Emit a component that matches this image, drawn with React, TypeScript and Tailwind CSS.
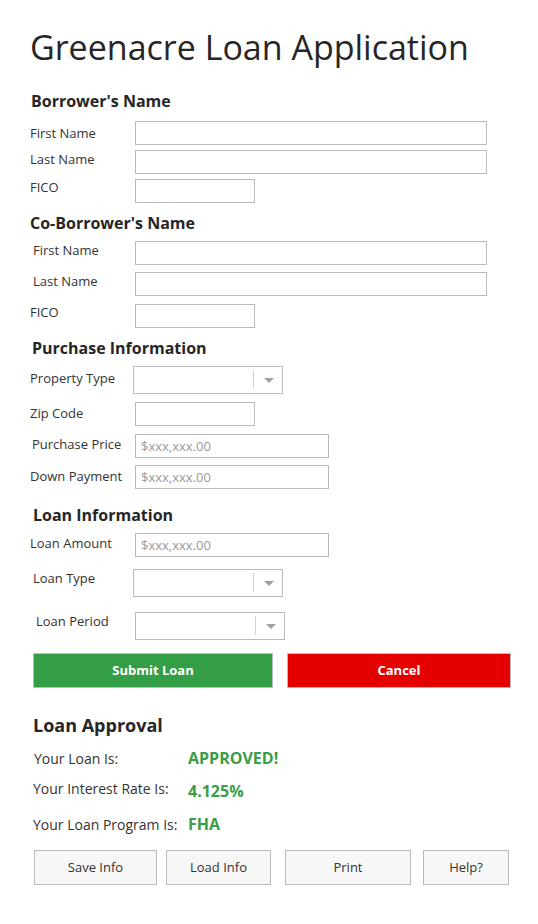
import React from 'react';

interface FieldProps {
  label: string;
  labelClass: string;
  rowClass: string;
  children: React.ReactNode;
}

function Field({ label, labelClass, rowClass, children }: FieldProps) {
  return (
    <div className={`flex items-center ${rowClass}`}>
      <div className={`shrink-0 text-[13px] leading-[18px] text-[#333] ${labelClass}`}>{label}</div>
      {children}
    </div>
  );
}

function TextBox({ wide, placeholder }: { wide: 'full' | 'short' | 'mid'; placeholder?: string }) {
  const w = wide === 'full' ? 'w-[352px]' : wide === 'mid' ? 'w-[194px]' : 'w-[120px]';
  return (
    <input
      type="text"
      placeholder={placeholder}
      className={`${w} h-[24px] border border-[#bbb] bg-white px-[5px] text-[13px] text-[#333] outline-none placeholder:text-[#999]`}
    />
  );
}

// dropdown look-alike: empty box, thin divider, grey caret
function Dropdown() {
  return (
    <div className="relative h-[28px] w-[150px] border border-[#bbb] bg-white">
      <div className="absolute left-[119px] top-[3px] h-[19px] w-px bg-[#d4d4d4]"></div>
      <svg className="absolute left-[130px] top-[11px]" width="10" height="5" viewBox="0 0 10 5">
        <path d="M0 0 L10 0 L5 5 Z" fill="#a0a0a0" />
      </svg>
    </div>
  );
}

export default function App() {
  return (
    <div className="min-h-[924px] w-[538px] bg-white pl-[30px] font-['Open_Sans','Liberation_Sans',sans-serif] text-[#333]">
      <h1 className="pt-[27px] text-[34px] leading-[40px] text-[#262626]">Greenacre Loan Application</h1>

      {/* Borrower */}
      <h2 className="mt-[23px] ml-px text-[16px] font-bold leading-[22px] text-[#262626]">Borrower's Name</h2>
      <Field label="First Name" labelClass="w-[105px]" rowClass="mt-[9px] h-[24px]">
        <TextBox wide="full" />
      </Field>
      <Field label="Last Name" labelClass="w-[105px] mb-[6px]" rowClass="mt-[5px] h-[24px]">
        <TextBox wide="full" />
      </Field>
      <Field label="FICO" labelClass="w-[105px] mb-[8px]" rowClass="mt-[5px] h-[24px]">
        <TextBox wide="short" />
      </Field>

      {/* Co-Borrower */}
      <h2 className="mt-[9px] text-[16px] font-bold leading-[22px] text-[#262626]">Co-Borrower's Name</h2>
      <Field label="First Name" labelClass="w-[105px] pl-[3px] mb-[6px]" rowClass="mt-[7px] h-[24px]">
        <TextBox wide="full" />
      </Field>
      <Field label="Last Name" labelClass="w-[105px] pl-[3px] mb-[6px]" rowClass="mt-[7px] h-[24px]">
        <TextBox wide="full" />
      </Field>
      <Field label="FICO" labelClass="w-[105px] mb-[8px]" rowClass="mt-[8px] h-[24px]">
        <TextBox wide="short" />
      </Field>

      {/* Purchase */}
      <h2 className="mt-[9px] ml-[2px] text-[16px] font-bold leading-[22px] text-[#262626]">Purchase Information</h2>
      <Field label="Property Type" labelClass="w-[103px] mb-[4px]" rowClass="mt-[7px] h-[28px]">
        <Dropdown />
      </Field>
      <Field label="Zip Code" labelClass="w-[105px] mb-[2px]" rowClass="mt-[8px] h-[24px]">
        <TextBox wide="short" />
      </Field>
      <Field label="Purchase Price" labelClass="w-[105px] pl-[2px] mb-[4px]" rowClass="mt-[8px] h-[24px]">
        <TextBox wide="mid" placeholder="$xxx,xxx.00" />
      </Field>
      <Field label="Down Payment" labelClass="w-[105px] mb-[2px]" rowClass="mt-[7px] h-[24px]">
        <TextBox wide="mid" placeholder="$xxx,xxx.00" />
      </Field>

      {/* Loan */}
      <h2 className="mt-[15px] ml-[3px] text-[16px] font-bold leading-[22px] text-[#262626]">Loan Information</h2>
      <Field label="Loan Amount" labelClass="w-[105px] mb-[4px]" rowClass="mt-[7px] h-[24px]">
        <TextBox wide="mid" placeholder="$xxx,xxx.00" />
      </Field>
      <Field label="Loan Type" labelClass="w-[103px] pl-[3px] mb-[10px]" rowClass="mt-[12px] h-[28px]">
        <Dropdown />
      </Field>
      <Field label="Loan Period" labelClass="w-[105px] pl-[6px] mb-[10px]" rowClass="mt-[15px] h-[28px]">
        <Dropdown />
      </Field>

      <div className="mt-[13px] ml-[3px] flex">
        <button className="h-[35px] w-[240px] border border-[#bdbdbd] bg-[#349e46] text-[13px] font-bold text-white">
          Submit Loan
        </button>
        <button className="ml-[14px] h-[35px] w-[224px] border border-[#bdbdbd] bg-[#e50000] text-[13px] font-bold text-white">
          Cancel
        </button>
      </div>

      {/* Approval */}
      <h2 className="mt-[25px] ml-[3px] text-[18px] font-bold leading-[24px] text-[#262626]">Loan Approval</h2>
      <div className="ml-[3px] mt-[9px] flex h-[24px] items-center">
        <span className="w-[155px] pl-px text-[14px] text-[#333]">Your Loan Is:</span>
        <span className="text-[16px] font-bold text-[#3a9d48]">APPROVED!</span>
      </div>
      <div className="ml-[3px] mt-[6px] flex h-[24px] items-center">
        <span className="w-[155px] text-[14px] text-[#333]">Your Interest Rate Is:</span>
        <span className="mt-[6px] text-[16px] font-bold text-[#3a9d48]">4.125%</span>
      </div>
      <div className="ml-[3px] mt-[12px] flex h-[24px] items-center">
        <span className="w-[155px] text-[14px] text-[#333]">Your Loan Program Is:</span>
        <span className="text-[16px] font-bold text-[#3a9d48]">FHA</span>
      </div>

      <div className="mt-[14px] ml-[4px] flex text-[13px] text-[#333]">
        <button className="h-[35px] w-[123px] border border-[#bbb] bg-[#f7f7f7]">Save Info</button>
        <button className="ml-[9px] h-[35px] w-[105px] border border-[#bbb] bg-[#f7f7f7]">Load Info</button>
        <button className="ml-[14px] h-[35px] w-[126px] border border-[#bbb] bg-[#f7f7f7]">Print</button>
        <button className="ml-[12px] h-[35px] w-[86px] border border-[#bbb] bg-[#f7f7f7]">Help?</button>
      </div>
    </div>
  );
}
